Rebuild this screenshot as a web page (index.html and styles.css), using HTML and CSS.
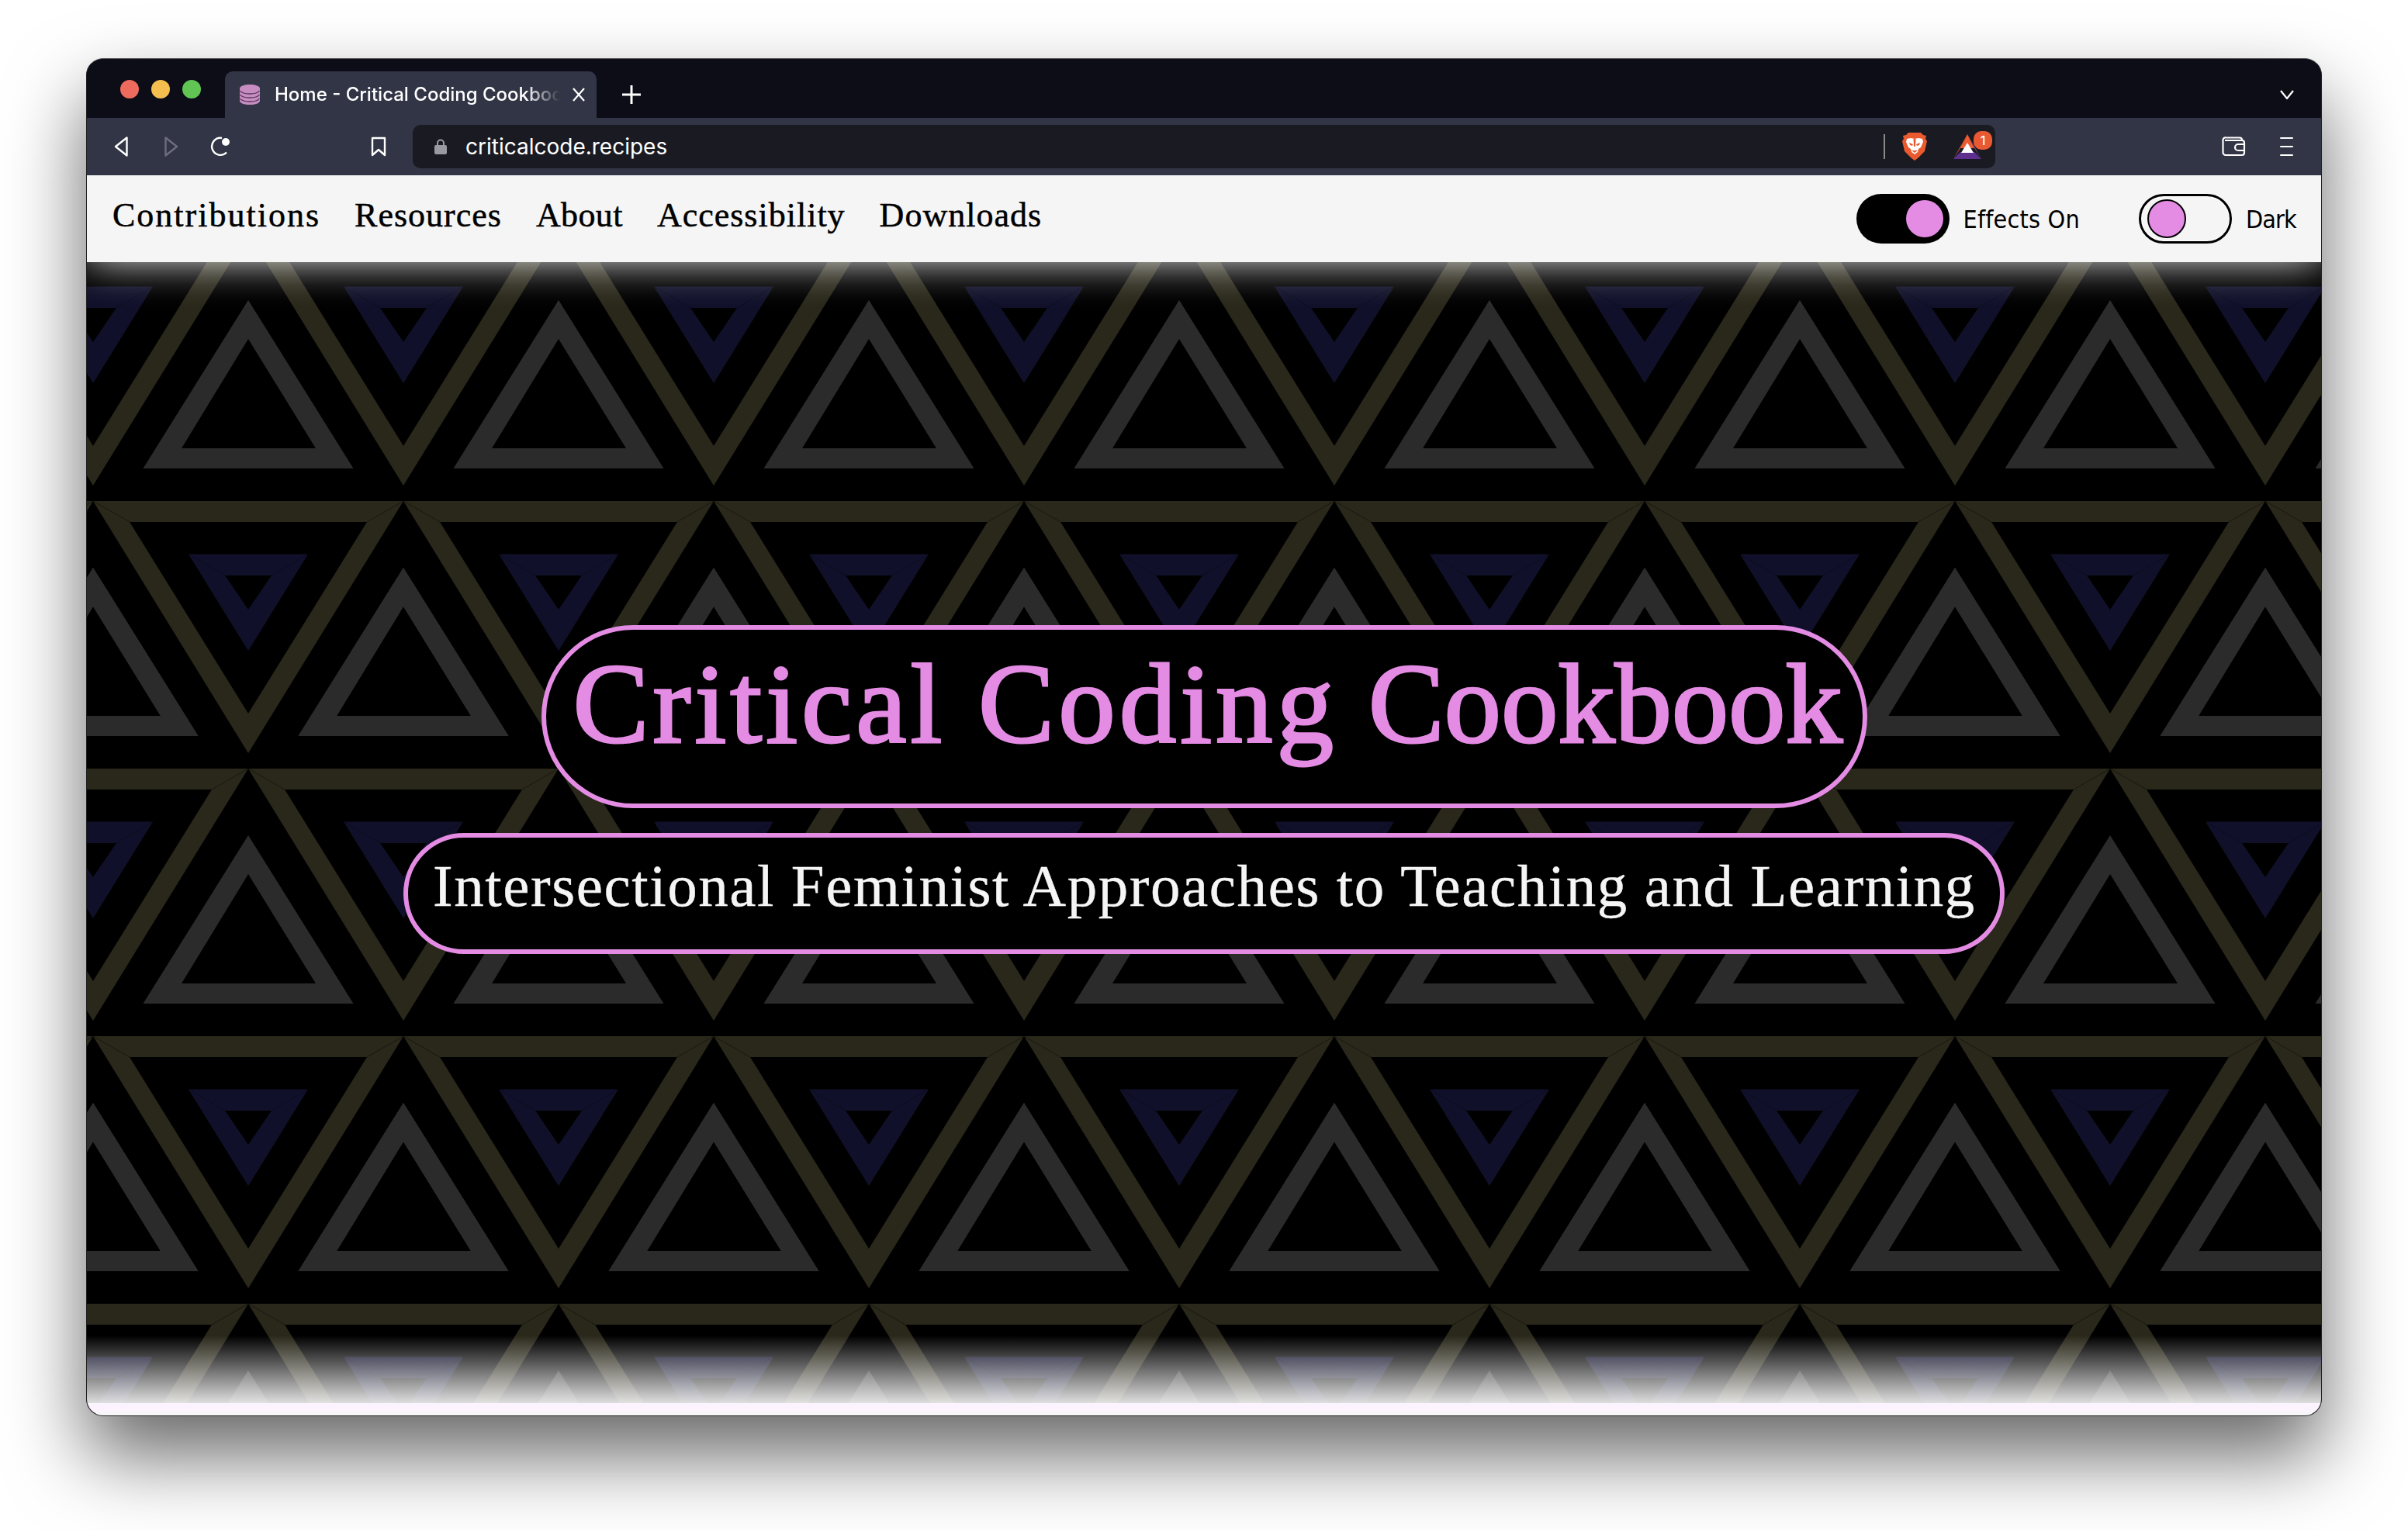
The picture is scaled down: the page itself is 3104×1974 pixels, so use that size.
FILE: index.html
```html
<!DOCTYPE html>
<html lang="en">
<head>
<meta charset="utf-8">
<title>Home - Critical Coding Cookbook</title>
<link rel="stylesheet" href="styles.css">
</head>
<body>
<div class="window">
  <div class="tabstrip">
    <div class="lights"><span class="light red"></span><span class="light yellow"></span><span class="light green"></span></div>
    <div class="tab">
      <svg class="favicon" viewBox="0 0 28 28"><path d="M1 6c0-3 6-5 13-5s13 2 13 5v16c0 3-6 5-13 5S1 25 1 22z" fill="#c78cc0"/><path d="M1.500 9c2 3 6 4 12.500 4s10.500-1 12.500-4M1.500 14c2 3 6 4 12.500 4s10.500-1 12.500-4M1.500 19c2 3 6 4 12.500 4s10.500-1 12.500-4" fill="none" stroke="#54365a" stroke-width="1.300"/></svg>
      <span class="tab-title">Home - Critical Coding Cookbook</span>
      <svg class="tab-close" viewBox="0 0 16 18"><path d="M1 1l14 16M15 1L1 17" stroke="#fff" stroke-width="2.200" fill="none"/></svg>
    </div>
    <svg class="newtab" viewBox="0 0 24 24"><path d="M12 0v24M0 12h24" stroke="#fff" stroke-width="3" fill="none"/></svg>
    <svg class="chevron" viewBox="0 0 18 12"><path d="M1 1l8 10 8-10" stroke="#fff" stroke-width="2.200" fill="none"/></svg>
  </div>
  <div class="toolbar">
    <svg class="tool back" viewBox="0 0 18 26"><path d="M16.500 1.500v23L2 13z" fill="none" stroke="#fff" stroke-width="2.400" stroke-linejoin="round"/></svg>
    <svg class="tool forward" viewBox="0 0 18 26"><path d="M1.500 1.500v23L16 13z" fill="none" stroke="#6c6e7c" stroke-width="2.400" stroke-linejoin="round"/></svg>
    <svg class="tool reload" viewBox="0 0 28 26"><path d="M22 20.500A11 11 0 1 1 16 2" fill="none" stroke="#fff" stroke-width="2.400"/><circle cx="21" cy="7" r="5" fill="#fff"/></svg>
    <svg class="tool bookmark" viewBox="0 0 20 26"><path d="M2 2h16v22l-8-7-8 7z" fill="none" stroke="#fff" stroke-width="2.400" stroke-linejoin="round"/></svg>
    <div class="urlbar">
      <svg class="lock" viewBox="0 0 16 20"><path d="M4 9V5.500a4 4 0 0 1 8 0V9" fill="none" stroke="#9a9ba2" stroke-width="2"/><rect y="8" width="16" height="12" rx="2" fill="#9a9ba2"/></svg>
      <span class="url">criticalcode.recipes</span>
      <span class="url-sep"></span>
      <svg class="brave" viewBox="0 0 32 36"><path d="M8 0h16l3 3 4 1-1 4 2 3-3 13-9 9-4 3-4-3-9-9L0 11l2-3-1-4 4-1z" fill="#ea5a2e"/><path d="M6 8l5-1 5 1 5-1 5 1 1 4-3 7-3 2-1 4-4 3-4-3-1-4-3-2-3-7z" fill="#fff"/><path d="M9 13l5 2-1 2-3-1zM23 13l-5 2 1 2 3-1zM14.500 8h3l-.5 10h-2zM12 23h8l-4 3z" fill="#ea5a2e"/></svg>
      <span class="bat-wrap">
        <svg class="bat" viewBox="0 0 36 32"><path d="M18 0L9 18h18z" fill="#ee5b30"/><path d="M18 0L0 32l9-14z" fill="#ee5b30"/><path d="M18 0l18 32-9-14z" fill="#8b4a85"/><path d="M0 32h36l-9-9H9z" fill="#5d2f8f"/><path d="M18 11l8 13H10z" fill="#fff"/></svg>
        <span class="badge">1</span>
      </span>
    </div>
    <svg class="wallet" viewBox="0 0 31 26"><path d="M5 1.500h18a3 3 0 0 1 3 3M4 5h22a3 3 0 0 1 3 3v13a3 3 0 0 1-3 3H5a3.500 3.500 0 0 1-3.500-3.500V4.500A3 3 0 0 1 5 1.500" fill="none" stroke="#fff" stroke-width="2.200"/><path d="M30 10h-9a3.500 3.500 0 0 0 0 8h9" fill="none" stroke="#fff" stroke-width="2.200"/></svg>
    <div class="menu"><span></span><span></span><span></span></div>
  </div>
  <nav class="nav">
    <div class="nav-links">
      <a class="wide" href="#">Contributions</a>
      <a href="#">Resources</a>
      <a class="tight" href="#">About</a>
      <a href="#">Accessibility</a>
      <a href="#">Downloads</a>
    </div>
    <div class="toggles">
      <div class="toggle-item">
        <span class="switch on"><span class="knob"></span></span>
        <span class="toggle-label">Effects On</span>
      </div>
      <div class="toggle-item">
        <span class="switch off"><span class="knob"></span></span>
        <span class="toggle-label short">Dark</span>
      </div>
    </div>
  </nav>
  <main class="hero">
    <svg class="pattern" aria-hidden="true">
      <defs>
        <g id="row">
          <path d="M0 0H400L200 325ZM47 27L200 274L353 27Z" fill="#2a281a" fill-rule="evenodd"/>
          <path d="M0 0L47 27M400 0L353 27" stroke="#000" stroke-opacity=".55" stroke-width=".8"/>
          <path d="M123 68.500H277L200 193ZM170 96L200 140L230 96Z" fill="#10102a" fill-rule="evenodd"/>
          <path d="M123 68.500L170 96M277 68.500L230 96" stroke="#000" stroke-opacity=".4" stroke-width=".8"/>
          <path id="up" d="M0 86L135.500 303H-135.500ZM0 136L-86 277H87Z" fill="#2b2b2b" fill-rule="evenodd"/>
          <use href="#up" x="400"/>
        </g>
        <pattern id="tile" patternUnits="userSpaceOnUse" x="208" y="-37" width="400" height="690">
          <use href="#row"/>
          <use href="#row" x="200" y="345"/>
          <use href="#row" x="-200" y="345"/>
        </pattern>
      </defs>
      <rect width="100%" height="100%" fill="url(#tile)"/>
    </svg>
    <h1 class="title"><span class="loose">Critical Coding</span> <span class="snug">Cookbook</span></h1>
    <h2 class="subtitle">Intersectional Feminist Approaches to Teaching and Learning</h2>
    <div class="fade"></div>
    <div class="foot"></div>
  </main>
</div>
</body>
</html>
```
FILE: styles.css
```css
* { box-sizing: border-box; }
html, body { margin: 0; background: #fff; }
body { width: 3104px; height: 1974px; padding: 75px 0 0 111px; overflow: hidden; }

.window {
  width: 2882px;
  height: 1751px;
  display: flex;
  flex-direction: column;
  border: 1px solid #222;
  border-top-color: #555;
  border-radius: 22px;
  overflow: hidden;
  box-shadow: 0 50px 100px rgba(0,0,0,.6);
  background: #0c0d17;
  font-family: Inter, "Liberation Sans", sans-serif;
}

.tabstrip {
  flex: 0 0 76px;
  display: flex;
  align-items: flex-end;
  background: #0c0d17;
  color: #fff;
}
.lights { display: flex; gap: 16px; padding: 0 0 25px 43px; width: 178px; }
.light { width: 24px; height: 24px; border-radius: 50%; }
.red { background: #ed6a5e; }
.yellow { background: #f4bf4f; }
.green { background: #61c554; }

.tab {
  width: 479px;
  height: 60px;
  display: flex;
  align-items: center;
  padding: 0 0 0 18px;
  background: #323545;
  border-radius: 10px 10px 0 0;
}
.favicon { width: 28px; height: 28px; flex: none; }
.tab-title {
  width: 368px;
  margin: -2px 0 0 18px;
  font-size: 24px;
  font-weight: 500;
  white-space: nowrap;
  overflow: hidden;
  -webkit-mask-image: linear-gradient(to right, #000 88%, transparent);
  mask-image: linear-gradient(to right, #000 88%, transparent);
}
.tab-close { width: 16px; height: 18px; margin-left: 16px; flex: none; }
.newtab { width: 24px; height: 24px; margin: 0 0 18px 33px; flex: none; }
.chevron { width: 18px; height: 12px; margin: 0 35px 24px auto; flex: none; }

.toolbar {
  flex: 0 0 74px;
  position: relative;
  z-index: 3;
  display: flex;
  align-items: center;
  background: #323545;
}
.tool { flex: none; height: 26px; }
.back { width: 18px; margin-left: 35px; }
.forward { width: 18px; margin-left: 47px; }
.reload { width: 28px; margin-left: 40px; }
.bookmark { width: 20px; margin-left: 180px; }

.urlbar {
  width: 2040px;
  height: 56px;
  margin-left: 34px;
  display: flex;
  align-items: center;
  background: #1a1b22;
  border-radius: 10px;
  flex: none;
}
.lock { width: 16px; height: 20px; margin-left: 28px; flex: none; }
.url { margin-left: 24px; color: #fff; font-size: 28px; white-space: nowrap; width: 1828px; }
.url-sep { width: 2px; height: 32px; background: #8a8a8a; flex: none; }
.brave { width: 32px; height: 36px; margin-left: 22px; flex: none; }
.bat-wrap { position: relative; display: block; width: 36px; height: 32px; margin-left: 34px; flex: none; }
.bat { display: block; width: 36px; height: 32px; }
.badge {
  position: absolute;
  left: 26px;
  top: -4px;
  width: 24px;
  height: 24px;
  border-radius: 10px;
  background: #e95a33;
  color: #fff;
  font-size: 16px;
  font-weight: 500;
  line-height: 24px;
  text-align: center;
}
.wallet { width: 31px; height: 26px; margin-left: 292px; flex: none; }
.menu { width: 17px; margin-left: 44px; display: flex; flex-direction: column; gap: 8.500px; flex: none; }
.menu span { display: block; height: 2.500px; background: #fff; border-radius: 1px; }

.nav {
  flex: 0 0 112px;
  position: relative;
  z-index: 2;
  display: flex;
  align-items: flex-start;
  justify-content: space-between;
  background: #f5f5f5;
  box-shadow: 0 -3px 54px #f5f5f5;
}
.nav-links { display: flex; gap: 44px; padding: 26px 0 0 33px; }
.nav-links a {
  color: #000;
  text-decoration: none;
  font-family: "Liberation Serif", serif;
  font-size: 44px;
  line-height: 52px;
  letter-spacing: 1px;
  white-space: nowrap;
  -webkit-text-stroke: .5px #000;
}
.nav-links .wide { letter-spacing: 2px; }
.nav-links .tight { letter-spacing: .4px; }
.toggles { display: flex; padding: 24px 32px 0 0; gap: 76px; }
.toggle-item { display: flex; align-items: center; gap: 18px; }
.switch {
  position: relative;
  display: block;
  width: 120px;
  height: 64px;
  border-radius: 32px;
  flex: none;
}
.switch.on { background: #000; }
.switch.off { background: #f5f5f5; border: 3px solid #000; box-shadow: inset 0 0 0 1px #fff; }
.knob { position: absolute; border-radius: 50%; background: #e48be4; }
.on .knob { left: 64px; top: 8px; width: 48px; height: 48px; }
.off .knob { left: 8px; top: 4px; width: 50px; height: 50px; border: 2px solid #000; }
.toggle-label {
  padding-top: 2px;
  font-family: "DejaVu Sans Condensed", "Noto Sans", sans-serif;
  font-stretch: condensed;
  font-size: 32px;
  letter-spacing: .2px;
  color: #000;
  white-space: nowrap;
}
.toggle-label.short { letter-spacing: -.8px; }

.hero {
  flex: 1;
  position: relative;
  display: flex;
  flex-direction: column;
  align-items: center;
  gap: 32px;
  padding-top: 468px;
  background: #000;
}
.pattern { position: absolute; inset: 0; width: 100%; height: 100%; }
.title, .subtitle {
  position: relative;
  margin: 0;
  background: #000;
  border: 6px solid #e48be4;
  border-radius: 999px;
  font-family: "Liberation Serif", serif;
  font-weight: 400;
  white-space: nowrap;
}
.title {
  width: 1709px;
  height: 236px;
  padding: 14px 0 0 35px;
  font-size: 147px;
  line-height: 164px;
  letter-spacing: 3px;
  color: #e48be4;
  -webkit-text-stroke: 3px #e48be4;
}
.title .loose { letter-spacing: 5px; }
.title .snug { letter-spacing: -.2px; }
.subtitle {
  width: 2064px;
  height: 156px;
  padding: 19px 0 0 32px;
  font-size: 77px;
  line-height: 86px;
  letter-spacing: 1.570px;
  color: #f5f5f5;
  -webkit-text-stroke: .4px #f5f5f5;
}
.fade {
  position: absolute;
  left: 0;
  right: 0;
  bottom: 16px;
  height: 87px;
  background: linear-gradient(to bottom, rgba(255,255,255,0), rgba(245,245,245,.9));
}
.foot {
  position: absolute;
  left: 0;
  right: 0;
  bottom: 0;
  height: 16px;
  background: linear-gradient(to bottom, #fbf3fd 12px, #f6f6f6 12px);
}
```
